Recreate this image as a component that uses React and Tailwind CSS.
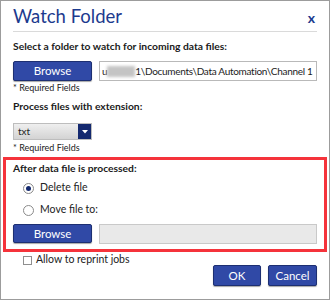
import React from "react";

const Btn = ({ children, className = "" }) => (
    <button
        className={`bg-[#3049a6] text-white border border-[#1d2f72] rounded-[2px] shadow-[0_1px_1px_rgba(0,0,0,0.35)] text-[11.5px] leading-none flex items-center justify-center ${className}`}
    >
        {children}
    </button>
);

export default function App() {
    return (
        <div className="w-[330px] h-[300px] bg-white border border-[#9c9c9c] font-['Lato',sans-serif] text-[#1b1b1b] flex flex-col px-[12px] overflow-hidden">
            {/* Title */}
            <div className="h-[31px] border-b border-[#dadada] flex items-center justify-between shrink-0">
                <h1 className="text-[18.5px] leading-none text-[#1c3a8e]">Watch Folder</h1>
                <span className="text-[14px] font-bold leading-none text-[#1c3a8e] mr-[2px] mt-[3px]">x</span>
            </div>

            <p className="mt-[7px] text-[10.3px] leading-[14px] font-bold">Select a folder to watch for incoming data files:</p>
            <div className="mt-[8px] h-[20px] flex gap-[7px]">
                <Btn className="w-[79px] h-[20px] shrink-0">Browse</Btn>
                <div className="flex-1 min-w-0 h-[20px] border border-[#b9b9b9] flex items-center pl-[2px] text-[10px] tracking-[-0.3px] overflow-hidden whitespace-nowrap">
                    <span className="shrink-0">u</span>
                    <span className="shrink-0 inline-block w-[28px] h-[11px] bg-[#c4c4c4] blur-[1.5px]"></span>
                    <span className="shrink-0">1\Documents\Data Automation\Channel 1</span>
                </div>
            </div>
            <p className="mt-[2px] text-[9px] leading-[10px] text-[#222]">* Required Fields</p>

            <p className="mt-[6px] text-[10.3px] leading-[14px] font-bold">Process files with extension:</p>
            <div className="mt-[10px] w-[79px] h-[17px] flex border border-[#bdbdbd] bg-gradient-to-b from-[#efefef] to-[#d3d3d3]">
                <span className="flex-1 text-[10px] leading-[15px] pl-[4px] text-[#222]">txt</span>
                <span className="w-[13px] h-full bg-[#14296f] flex items-center justify-center">
                    <svg width="6" height="4" viewBox="0 0 6 4"><path d="M0 0h6L3 3.5z" fill="#fff" /></svg>
                </span>
            </div>
            <p className="mt-[3px] text-[9px] leading-[10px] text-[#222]">* Required Fields</p>

            {/* Highlighted section */}
            <div className="mt-[4px] -mx-[10px] border-[3px] border-[#f5333b] pl-[7px] pr-[7px] pt-[1px] pb-[5px]">
                <p className="text-[10.3px] leading-[14px] font-bold">After data file is processed:</p>
                <label className="mt-[5px] h-[16px] flex items-center ml-[10px] gap-[6px] text-[10.5px] text-[#222]">
                    <span className="w-[11px] h-[11px] rounded-full border border-[#8a8a8a] bg-white flex items-center justify-center">
                        <span className="w-[5px] h-[5px] rounded-full bg-[#14296f]"></span>
                    </span>
                    Delete file
                </label>
                <label className="mt-[6px] h-[16px] flex items-center ml-[10px] gap-[6px] text-[10.5px] text-[#222]">
                    <span className="w-[11px] h-[11px] rounded-full border border-[#8a8a8a] bg-white"></span>
                    Move file to:
                </label>
                <div className="mt-[6px] h-[20px] flex gap-[7px]">
                    <Btn className="w-[79px] h-[19px] shrink-0">Browse</Btn>
                    <div className="flex-1 h-[20px] border border-[#c9c9c9] bg-[#e9e9e9]"></div>
                </div>
            </div>

            <div className="flex justify-between items-start">
                <label className="mt-[1px] h-[14px] ml-[10px] flex items-center gap-[4px] text-[10.5px] text-[#222]">
                    <span className="w-[9px] h-[9px] border border-[#8f8f8f] bg-white"></span>
                    Allow to reprint jobs
                </label>
                <div className="mt-[13px] flex gap-[7px]">
                    <Btn className="w-[48px] h-[21px]">OK</Btn>
                    <Btn className="w-[49px] h-[21px]">Cancel</Btn>
                </div>
            </div>
        </div>
    );
}
